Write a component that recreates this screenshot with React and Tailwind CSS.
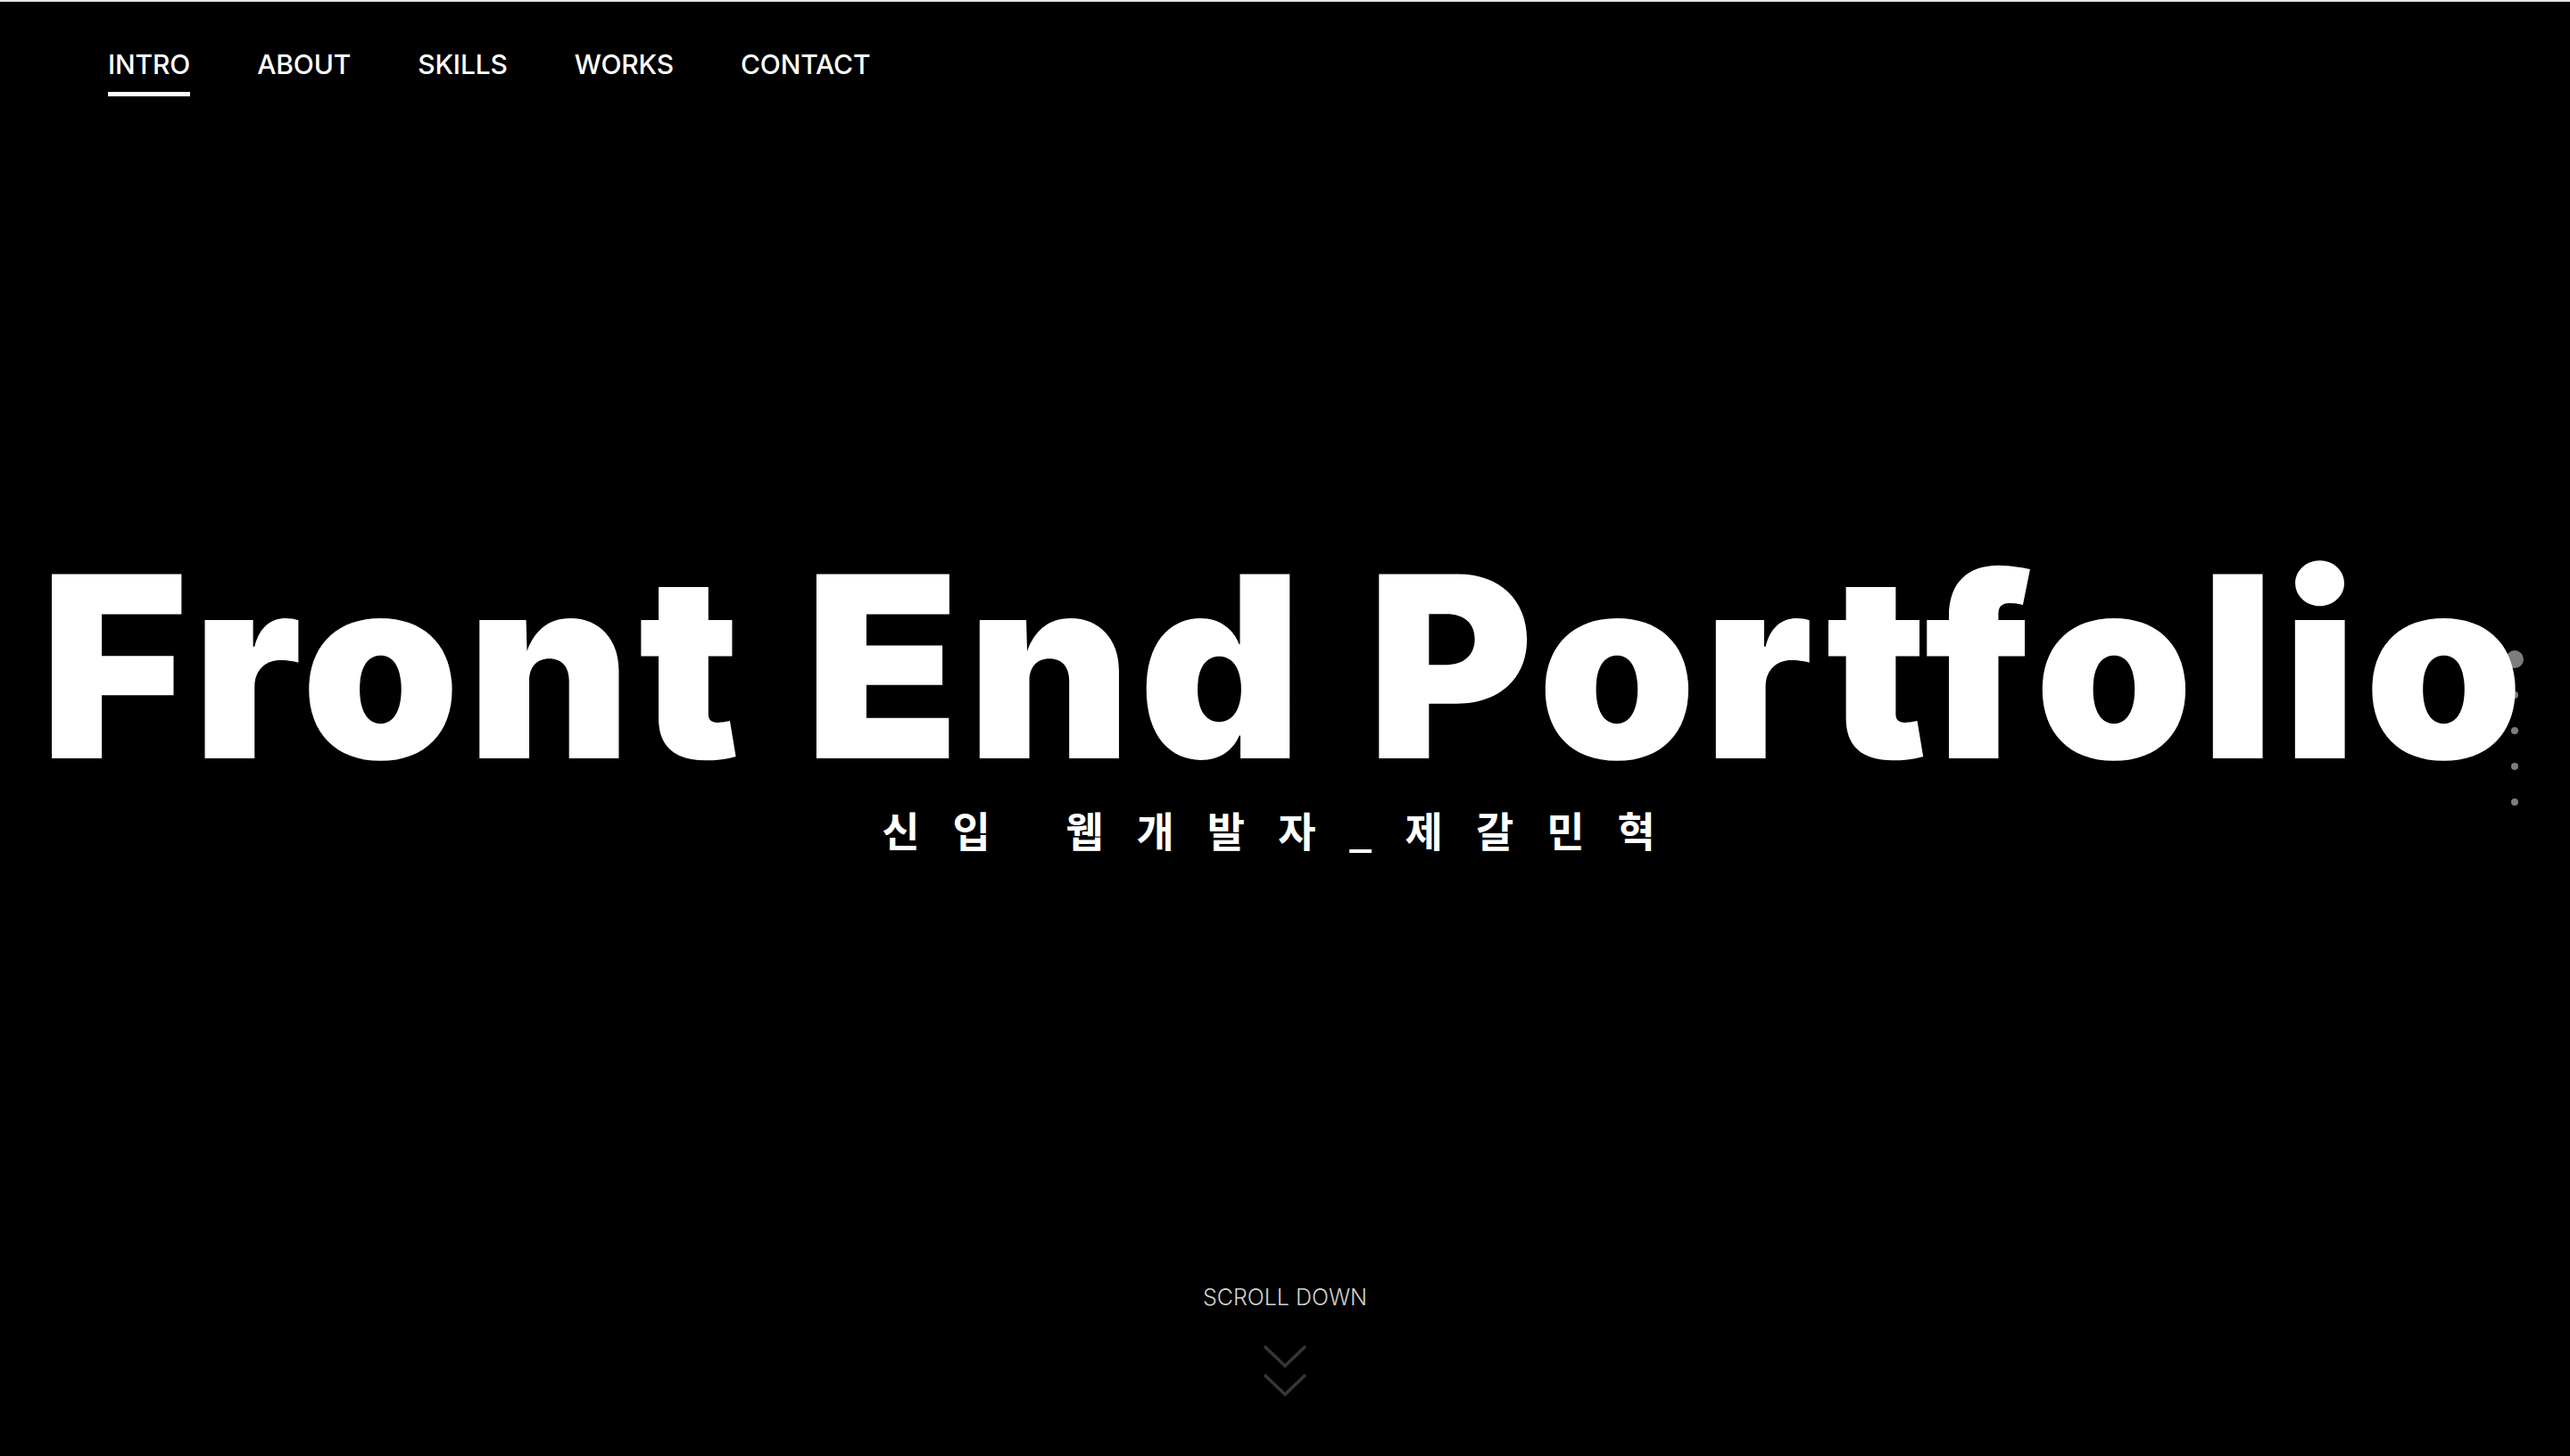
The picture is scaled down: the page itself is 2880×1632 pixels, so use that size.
import { useState } from "react";

const menus = ["INTRO", "ABOUT", "SKILLS", "WORKS", "CONTACT"];

export default function App() {
  const [active, setActive] = useState(0);

  return (
    <div className="relative w-full h-[1632px] bg-black border-t-2 border-[#e4e4e4] overflow-hidden font-['Inter',sans-serif]">
      {/* top menu */}
      <nav className="flex gap-[67px] pl-[117px] pt-[54px]">
        {menus.map((m, i) => (
          <button
            key={m}
            onClick={() => setActive(i)}
            className="flex flex-col px-1 text-white text-[30px] leading-none font-medium tracking-[-0.005em]"
          >
            <span className="pt-[1px]">{m}</span>
            <span className={`mt-[16px] h-[5px] w-full ${i === active ? "bg-white" : "bg-transparent"}`}></span>
          </button>
        ))}
      </nav>

      {/* side dots, sit behind the title */}
      <div className="absolute right-[52px] top-[717px] flex flex-col">
        {[0, 1, 2, 3, 4].map((d) => (
          <div key={d} className="w-[20px] h-[40px] flex items-center justify-center">
            <span className={`rounded-full bg-[#7d7d7d] ${d === active ? "w-[20px] h-[20px]" : "w-[8px] h-[8px]"}`}></span>
          </div>
        ))}
      </div>

      {/* hero */}
      <section className="relative z-10 flex flex-col items-center mt-[497px]">
        <h1 className="text-white text-[284px] leading-none font-black tracking-[8px] whitespace-nowrap">
          Front End Portfolio
        </h1>
        <p className="mt-[17px] text-white text-[46px] leading-none font-bold tracking-[37px] font-['Noto_Sans_CJK_KR',sans-serif]">
          신입 웹개발자_제갈민혁
        </p>
        <div className="mt-[490px] flex flex-col items-center">
          <span className="text-[#d0d0d0] text-[25px] leading-none font-light">SCROLL DOWN</span>
          <svg className="mt-[39px]" width="50" height="64" viewBox="0 0 50 64" fill="none" stroke="#363636" strokeWidth="3.5">
            <polyline points="2,3 25,25 48,3" />
            <polyline points="2,35 25,57 48,35" />
          </svg>
        </div>
      </section>
    </div>
  );
}
